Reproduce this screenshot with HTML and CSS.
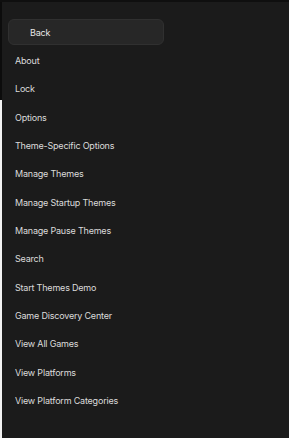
FILE: index.html
```html
<!DOCTYPE html>
<html>
<head>
<meta charset="utf-8">
<link rel="stylesheet" href="styles.css">
</head>
<body>
<div class="frame">
  <div class="edge">
    <div class="edge-dark"></div>
    <div class="edge-light"></div>
  </div>
  <nav class="menu">
    <button class="back">Back</button>
    <ul class="items">
      <li>About</li>
      <li>Lock</li>
      <li>Options</li>
      <li>Theme-Specific Options</li>
      <li>Manage Themes</li>
      <li>Manage Startup Themes</li>
      <li>Manage Pause Themes</li>
      <li>Search</li>
      <li>Start Themes Demo</li>
      <li>Game Discovery Center</li>
      <li>View All Games</li>
      <li>View Platforms</li>
      <li>View Platform Categories</li>
    </ul>
  </nav>
</div>
</body>
</html>
```
FILE: styles.css
```css
html, body {
  margin: 0;
  padding: 0;
  background: #1b1b1b;
  height: 100%;
}
.frame {
  display: flex;
  height: 438px;
  border-top: 2px solid #0f0f0f;
  box-sizing: border-box;
  font-family: Inter, "Noto Sans", sans-serif;
  font-size: 9px;
  letter-spacing: -0.2px;
  color: #dcdcdc;
}
.edge {
  width: 2px;
  display: flex;
  flex-direction: column;
}
.edge-dark {
  height: 98px;
  background: #0c0c0c;
}
.edge-light {
  flex: 1;
  background: #f2f2f2;
}
.menu {
  flex: 1;
  display: flex;
  flex-direction: column;
  padding-top: 17px;
}
.back {
  margin-left: 6px;
  width: 156px;
  height: 26px;
  box-sizing: border-box;
  background: #272727;
  border: 1px solid #303030;
  border-radius: 6px;
  color: #e6e6e6;
  font: inherit;
  letter-spacing: inherit;
  text-align: left;
  padding: 0 0 0 21px;
}
.items {
  list-style: none;
  margin: 2px 0 0 0;
  padding: 0;
}
.items li {
  height: 28.33px;
  line-height: 28.33px;
  padding-left: 13px;
  white-space: nowrap;
}
```
